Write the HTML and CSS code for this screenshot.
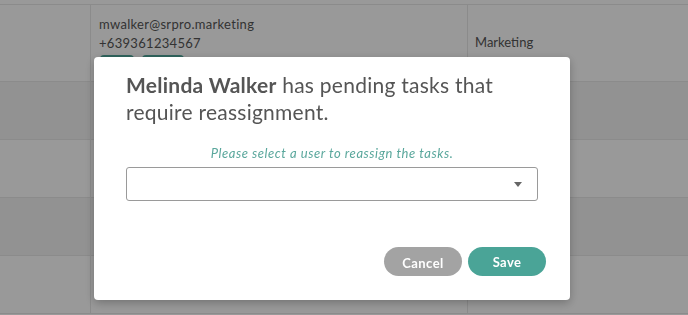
FILE: index.html
```html
<!DOCTYPE html>
<html>
<head>
<meta charset="utf-8">
<link rel="stylesheet" href="styles.css">
</head>
<body>
<div class="table">
  <div class="row row-head"></div>
  <div class="row row-light row-tall">
    <div class="cell cell-a"></div>
    <div class="cell cell-b">
      <div class="line">mwalker@srpro.marketing</div>
      <div class="line">+639361234567</div>
      <div class="badges"><span class="badge b1"></span><span class="badge b2"></span></div>
    </div>
    <div class="cell cell-c"><div class="dept">Marketing</div></div>
  </div>
  <div class="row row-dark"><div class="cell cell-a"></div><div class="cell cell-b"></div><div class="cell cell-c"></div></div>
  <div class="row row-light"><div class="cell cell-a"></div><div class="cell cell-b"></div><div class="cell cell-c"></div></div>
  <div class="row row-dark"><div class="cell cell-a"></div><div class="cell cell-b"></div><div class="cell cell-c"></div></div>
  <div class="row row-light"><div class="cell cell-a"></div><div class="cell cell-b"></div><div class="cell cell-c"></div></div>
</div>
<div class="overlay">
  <div class="modal">
    <h2 class="title"><strong>Melinda Walker</strong> has pending tasks that require reassignment.</h2>
    <p class="hint">Please select a user to reassign the tasks.</p>
    <div class="select"><span class="caret"></span></div>
    <div class="actions">
      <button class="btn btn-cancel">Cancel</button>
      <button class="btn btn-save">Save</button>
    </div>
  </div>
</div>
</body>
</html>
```

FILE: styles.css
```css
html, body {
  margin: 0;
  padding: 0;
  width: 688px;
  height: 315px;
  overflow: hidden;
  font-family: "Lato", "Noto Sans", sans-serif;
  background: #ffffff;
}
.table {
  display: flex;
  flex-direction: column;
}
.row {
  display: flex;
  height: 57px;
  border-bottom: 1px solid #e8e8e8;
}
.row-head {
  height: 4px;
}
.row-tall {
  height: 76px;
}
.row-light { background: #ffffff; }
.row-dark { background: #f4f4f4; }
.cell {
  box-sizing: border-box;
}
.cell-a {
  width: 91px;
  border-right: 1px solid #e8e8e8;
}
.cell-b {
  width: 377px;
  border-right: 1px solid #e8e8e8;
  padding: 10px 0 0 8px;
  color: #555;
  font-size: 13px;
  letter-spacing: 0.3px;
}
.cell-b .line {
  height: 19px;
  line-height: 19px;
}
.badges {
  display: flex;
  gap: 8px;
  margin-top: 2px;
  padding-left: 1px;
}
.badge {
  height: 18px;
  border-radius: 4px;
  background: #4fa79b;
}
.b1 { width: 34px; }
.b2 { width: 42px; }
.cell-c {
  flex: 1;
  padding: 29px 0 0 7px;
  color: #555;
  font-size: 13px;
}
.overlay {
  position: fixed;
  inset: 0;
  background: rgba(0, 0, 0, 0.4);
  padding: 57px 0 0 94px;
}
.modal {
  box-sizing: border-box;
  width: 476px;
  height: 243px;
  background: #fff;
  border-radius: 4px;
  box-shadow: 0 3px 10px rgba(0, 0, 0, 0.25);
  padding: 14px 32px 24px 32px;
  display: flex;
  flex-direction: column;
}
.title {
  margin: 0;
  font-size: 21px;
  line-height: 27px;
  font-weight: 400;
  color: #555;
  letter-spacing: 0.25px;
  width: 390px;
}
.title strong {
  font-weight: 700;
}
.hint {
  margin: 20px 0 0 0;
  text-align: center;
  font-style: italic;
  font-size: 13px;
  line-height: 16px;
  letter-spacing: 0.55px;
  color: #5aa79c;
}
.select {
  margin-top: 6px;
  height: 34px;
  box-sizing: border-box;
  border: 1px solid #9a9a9a;
  border-radius: 3px;
  display: flex;
  justify-content: flex-end;
  align-items: center;
  padding-right: 15px;
}
.caret {
  width: 0;
  height: 0;
  border-left: 4.5px solid transparent;
  border-right: 4.5px solid transparent;
  border-top: 5px solid #666;
}
.actions {
  margin-top: auto;
  display: flex;
  justify-content: flex-end;
  gap: 6px;
  margin-right: -8px;
}
.btn {
  width: 78px;
  height: 29px;
  border: none;
  border-radius: 15px;
  color: #fff;
  font-family: inherit;
  font-weight: 700;
  font-size: 13px;
  letter-spacing: 0.4px;
  padding: 0;
}
.btn-cancel {
  background: #a3a3a3;
  padding-top: 2px;
}
.btn-save {
  background: #4aa497;
}
```
